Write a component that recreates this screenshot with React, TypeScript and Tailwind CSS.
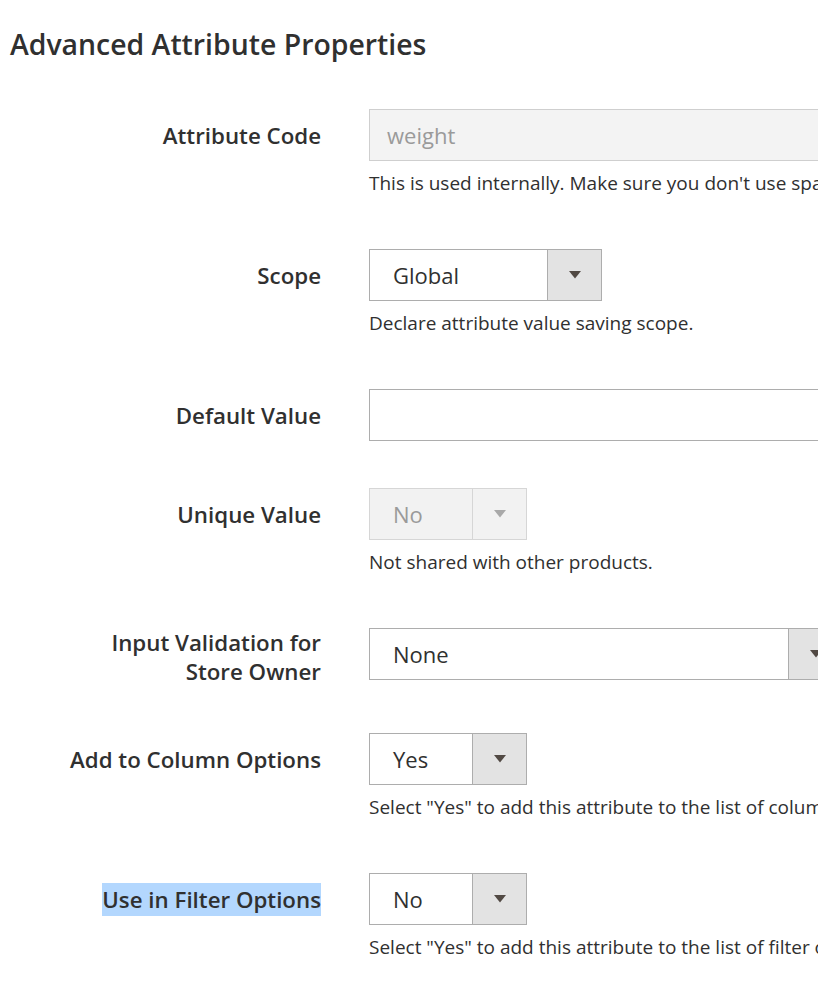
import React from "react";

const font = { fontFamily: '"Open Sans", "Liberation Sans", sans-serif' };

function Arrow({ disabled }: { disabled?: boolean }) {
  return (
    <svg width="12" height="8" viewBox="0 0 12 8">
      <path d="M0 0 L12 0 L6 7.5 Z" fill={disabled ? "#a9a9a9" : "#514943"} />
    </svg>
  );
}

function Select({
  value,
  width,
  disabled,
}: {
  value: string;
  width: string;
  disabled?: boolean;
}) {
  return (
    <div
      className={`flex h-[52px] border ${width} ${
        disabled ? "border-[#d6d6d6] bg-[#f2f2f2]" : "border-[#adadad] bg-white"
      }`}
    >
      <div
        className={`flex flex-1 items-center pl-[23px] text-[22px] ${
          disabled ? "text-[#9a9a9a]" : "text-[#303030]"
        }`}
      >
        {value}
      </div>
      <div
        className={`flex w-[54px] items-center justify-center border-l ${
          disabled ? "border-[#d6d6d6] bg-[#f2f2f2]" : "border-[#adadad] bg-[#e3e3e3]"
        }`}
      >
        <Arrow disabled={disabled} />
      </div>
    </div>
  );
}

function Row({
  label,
  twoLine,
  highlight,
  children,
  note,
}: {
  label: React.ReactNode;
  twoLine?: boolean;
  highlight?: boolean;
  children: React.ReactNode;
  note?: string;
}) {
  return (
    <div className="mb-[47px] flex">
      <div
        className={`w-[321px] shrink-0 text-right text-[22.3px] font-semibold leading-[29px] text-[#303030] ${
          twoLine ? "pt-0" : "pt-[12px]"
        }`}
      >
        {highlight ? <span className="bg-[#b3d7fe] py-[1px]">{label}</span> : label}
      </div>
      <div className="ml-[48px] min-w-0 flex-1">
        {children}
        {note && (
          <div className="whitespace-nowrap pb-[5px] pt-[8px] text-[19px] leading-[28px] text-[#303030]">
            {note}
          </div>
        )}
      </div>
    </div>
  );
}

export default function App() {
  return (
    <div className="h-[999px] w-[818px] overflow-hidden bg-white" style={font}>
      <h2 className="pl-[10px] pt-[24px] text-[28.4px] font-semibold leading-[40px] text-[#303030]">
        Advanced Attribute Properties
      </h2>
      <div className="mt-[45px]">
        <Row
          label="Attribute Code"
          note="This is used internally. Make sure you don't use spaces or more than 60 symbols."
        >
          <div className="flex h-[52px] w-[700px] items-center border border-[#cfcfcf] bg-[#f3f3f3] pl-[17px] text-[22px] text-[#9a9a9a]">
            weight
          </div>
        </Row>
        <Row label="Scope" note="Declare attribute value saving scope.">
          <Select value="Global" width="w-[233px]" />
        </Row>
        <Row label="Default Value">
          <div className="h-[52px] w-[700px] border border-[#adadad] bg-white" />
        </Row>
        <Row label="Unique Value" note="Not shared with other products.">
          <Select value="No" width="w-[158px]" disabled />
        </Row>
        <Row
          twoLine
          label={
            <>
              Input Validation for
              <br />
              Store Owner
            </>
          }
        >
          <Select value="None" width="w-[474px]" />
        </Row>
        <Row
          label="Add to Column Options"
          note={'Select "Yes" to add this attribute to the list of column options in the product grid.'}
        >
          <Select value="Yes" width="w-[158px]" />
        </Row>
        <Row
          label="Use in Filter Options"
          highlight
          note={'Select "Yes" to add this attribute to the list of filter options in the product grid.'}
        >
          <Select value="No" width="w-[158px]" />
        </Row>
      </div>
    </div>
  );
}
